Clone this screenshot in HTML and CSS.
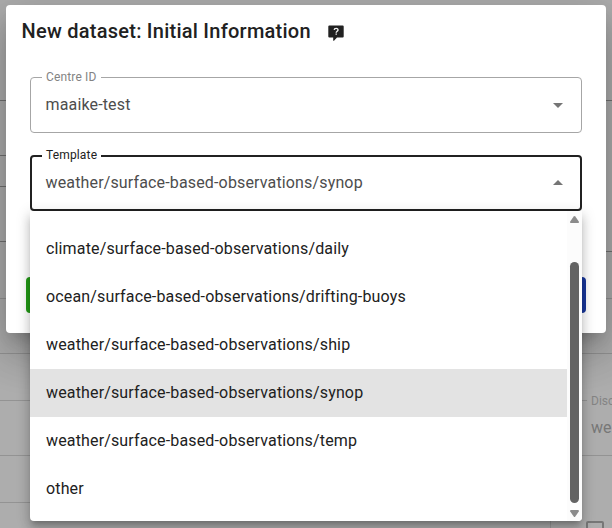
FILE: index.html
```html
<!DOCTYPE html>
<html lang="en">
<head>
<meta charset="utf-8">
<title>New dataset</title>
<link rel="stylesheet" href="styles.css">
</head>
<body>
<div class="page">
  <div class="page-col">
    <div class="rule h101 dark"></div>
    <div class="rule h55 dark"></div>
    <div class="rule h31 dark"></div>
    <div class="rule h55 dark"></div>
    <div class="rule h57"></div>
    <div class="rule h55"></div>
    <div class="rule h47"></div>
    <div class="rule h55"></div>
    <div class="rule h47"></div>
  </div>
  <div class="page-col">
    <div class="rule h101 dark"></div>
    <div class="rule h151 dark"></div>
    <div class="rule h47"></div>
    <div class="rule h55"></div>
    <div class="under-field">
      <div class="under-label"><i></i><span>Disc</span></div>
      <div class="under-value">we</div>
    </div>
    <div class="under-foot"><div class="under-card"><div class="checkbox"></div></div></div>
  </div>
</div>

<main class="dialog">
  <header class="dialog-title">
    <h1>New dataset: Initial Information</h1>
    <svg class="help" width="16" height="16" viewBox="0 0 16 16">
      <path d="M1.300 .5h13.400q1 0 1 1v10.100q0 1-1 1H9L6 15.700H5.200v-3.100H1.300q-1 0-1-1V1.500q0-1 1-1z" fill="#212121"/>
      <path d="M6.200 4.900C6.300 2.900 10 2.800 10 4.900 10 6.200 8.200 6.200 8.200 7.700M8.200 8.500v1.300" fill="none" stroke="#f2f2f2" stroke-width="1.400"/>
    </svg>
  </header>
  <fieldset class="field">
    <legend>Centre ID</legend>
    <span>maaike-test</span>
    <svg class="caret-down" width="10" height="5" viewBox="0 0 10 5"><path d="M0 0h10L5 5z" fill="#757575"/></svg>
  </fieldset>
  <fieldset class="field focused">
    <legend>Template</legend>
    <span>weather/surface-based-observations/synop</span>
    <svg width="10" height="5" viewBox="0 0 10 5"><path d="M0 5h10L5 0z" fill="#757575"/></svg>
  </fieldset>
  <footer class="actions">
    <button class="btn green"></button>
    <button class="btn blue"></button>
  </footer>
</main>

<div class="menu">
  <ul class="options">
    <li>climate/surface-based-observations/daily</li>
    <li>ocean/surface-based-observations/drifting-buoys</li>
    <li>weather/surface-based-observations/ship</li>
    <li class="selected">weather/surface-based-observations/synop</li>
    <li>weather/surface-based-observations/temp</li>
    <li>other</li>
  </ul>
  <div class="scrollbar">
    <svg width="9" height="7" viewBox="0 0 9 7"><path d="M3.700.6q.8-1.100 1.600 0L8.800 5.500Q9.200 7 8 7H1Q-.2 7 .2 5.500z" fill="#8b8b8b"/></svg>
    <div class="thumb"></div>
    <svg width="9" height="7" viewBox="0 0 9 7"><path d="M3.700 6.400q.8 1.100 1.600 0L8.800 1.500Q9.200 0 8 0H1Q-.2 0 .2 1.500z" fill="#8b8b8b"/></svg>
  </div>
</div>
</body>
</html>
```
FILE: styles.css
```css
* { box-sizing: border-box; }

body {
  margin: 0;
  width: 612px;
  height: 528px;
  overflow: hidden;
  position: relative;
  background: #adadad;
  font-family: Roboto, "Liberation Sans", sans-serif;
  font-size: 16px;
  letter-spacing: .15px;
  color: #212121;
}

.page { display: flex; height: 528px; overflow: hidden; }
.page-col { width: 306px; }
.rule { border-bottom: 1px solid #939393; }
.rule.dark { border-color: #727272; }
.h31 { height: 31px; }
.h47 { height: 47px; }
.h55 { height: 55px; }
.h57 { height: 57px; }
.h101 { height: 101px; }
.h151 { height: 151px; }

.under-field {
  height: 102px;
  border-bottom: 1px solid #939393;
  padding-top: 37px;
  color: #848484;
}
.under-label { display: flex; align-items: center; font-size: 12px; line-height: 18px; height: 19px; letter-spacing: 0; }
.under-label i { flex: none; width: 281px; height: 1px; margin-right: 4px; background: #939393; }
.under-value { margin: 6px 0 0 285px; line-height: 24px; color: #777; letter-spacing: 0; }
.under-foot { height: 72px; padding: 65px 0 0 244px; }
.under-card { height: 7px; border-left: 1px solid #999; padding-left: 35px; }
.checkbox { width: 18px; height: 18px; border: 2px solid #777; border-radius: 2px; }

.dialog {
  position: absolute;
  left: 6px;
  top: 5px;
  width: 600px;
  height: 328px;
  border-radius: 4px;
  background: #fff;
  box-shadow: 0 11px 15px -7px rgba(0,0,0,.2), 0 24px 38px 3px rgba(0,0,0,.14), 0 9px 46px 8px rgba(0,0,0,.12);
}
.dialog-title { display: flex; align-items: center; height: 64px; padding: 0 16px 12px 15.5px; }
.dialog-title h1 { margin: 0; font-size: 20px; line-height: 32px; font-weight: 500; letter-spacing: .25px; }
.help { margin: 4px 0 0 17.5px; }

.field {
  display: flex;
  align-items: center;
  justify-content: space-between;
  width: 552px;
  height: 64px;
  margin: 0 24px 14px;
  padding: 0 18px 8px 14.5px;
  border: 1px solid #a6a6a6;
  border-radius: 4px;
  color: #4d4d4d;
}
.field legend { height: 16px; padding: 0 4px; margin-left: -3.5px; font-size: 12px; line-height: 16px; color: #838383; }
.field span { line-height: 24px; }
.caret-down { margin-top: 2px; }
.field.focused { border: 2px solid #212121; padding: 0 17px 9px 13.5px; }
.field.focused legend { height: 18px; color: #212121; }

.actions { display: flex; justify-content: space-between; padding: 52px 20px 0; }
.btn { width: 80px; height: 36px; border: 0; border-radius: 4px; }
.green { background: #239b17; }
.blue { background: #19379b; }

.menu {
  position: absolute;
  left: 30px;
  top: 211px;
  width: 552px;
  height: 310px;
  display: flex;
  background: #fff;
  border-radius: 0 0 4px 4px;
  overflow: hidden;
  box-shadow: 0 5px 5px -3px rgba(0,0,0,.2), 0 8px 10px 1px rgba(0,0,0,.14), 0 3px 14px 2px rgba(0,0,0,.12);
}
.options { flex: 1; margin: 0; padding: 14px 0 0; list-style: none; }
.options li { height: 48px; padding: 0 16px; line-height: 48px; }
.options .selected { background: #e3e3e3; }
.scrollbar { width: 15px; padding: 5px 3px 4px; background: #fcfcfc; display: flex; flex-direction: column; justify-content: space-between; }
.scrollbar svg { display: block; }
.thumb { width: 9px; height: 241px; margin-top: 32px; border-radius: 5px; background: #636363; }
```
